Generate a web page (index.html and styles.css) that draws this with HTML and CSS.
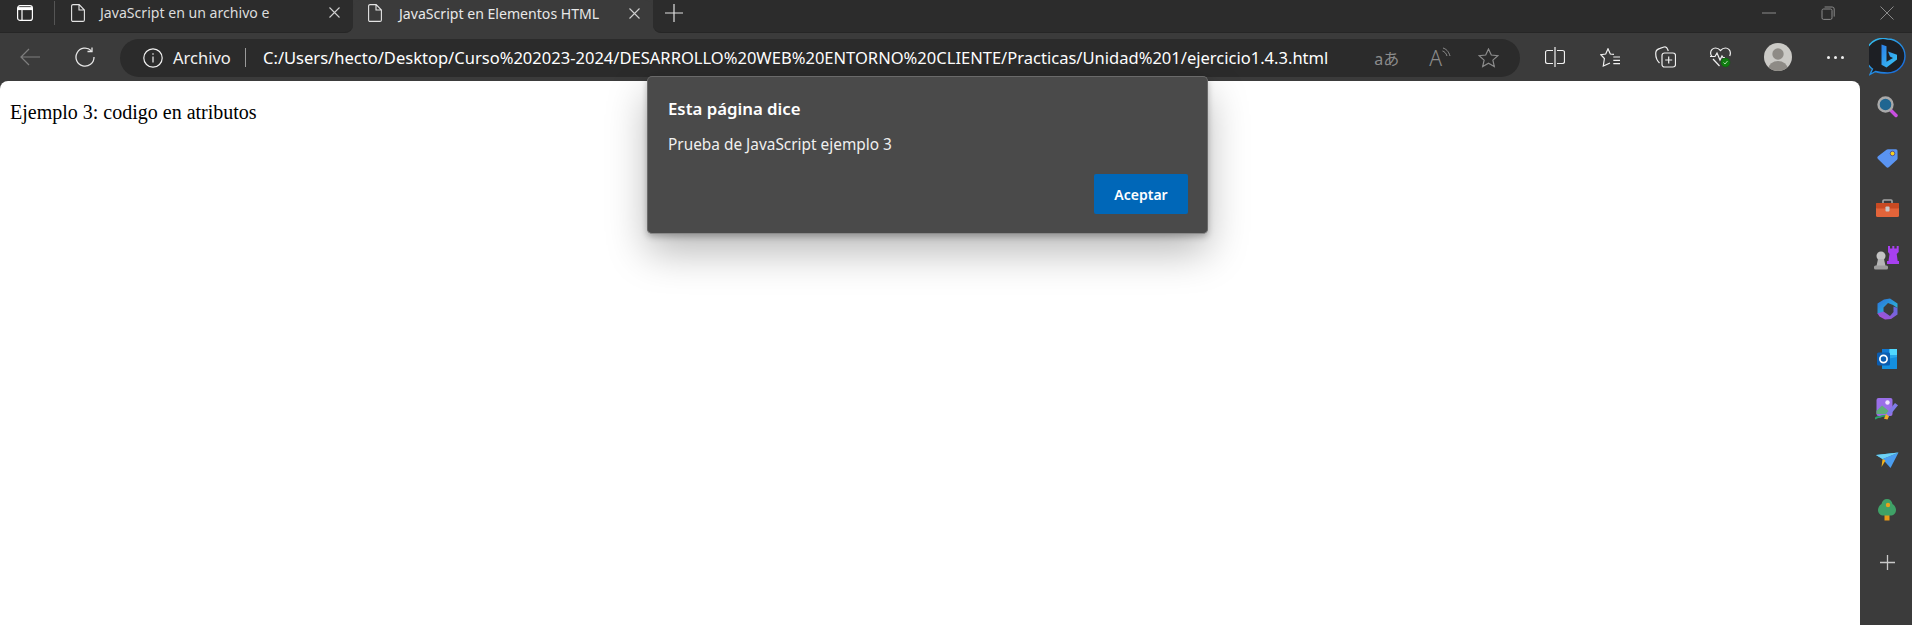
FILE: index.html
```html
<!DOCTYPE html>
<html lang="es">

<head>
  <meta charset="UTF-8">
  <meta name="viewport" content="width=device-width, initial-scale=1.0">
  <title>JavaScript en Elementos HTML</title>
  <link rel="stylesheet" href="styles.css">
</head>

<body>
  <!-- tabs -->
  <div class="tabstrip">
    <div class="tabs-left">
      <svg class="app-icon" width="16" height="16" viewBox="0 0 16 16" fill="none" stroke="#fff" stroke-width="1.2">
        <rect x="0.6" y="0.6" width="14.8" height="14.8" rx="2.5" />
        <path d="M1 3.6h14" stroke-width="3" />
        <path d="M5 4v11" />
      </svg>
      <span class="tab-sep"></span>
      <div class="tab tab-off">
        <svg class="doc" width="14" height="18" viewBox="0 0 14 18" fill="none" stroke="#e4e4e4" stroke-width="1.1">
          <path d="M2 .6h6.2L13.4 6v10a1.4 1.4 0 0 1-1.4 1.4H2A1.4 1.4 0 0 1 .6 16V2A1.4 1.4 0 0 1 2 .6zM8 .8V6h5.2" />
        </svg>
        <span class="tab-title">JavaScript en un archivo e</span>
        <svg class="tab-close" width="11" height="11" viewBox="0 0 11 11" stroke="#d0d0d0" stroke-width="1.1">
          <path d="M.5.5l10 10M10.5.5l-10 10" />
        </svg>
      </div>
    </div>
    <div class="tab tab-on">
      <svg class="doc" width="14" height="18" viewBox="0 0 14 18" fill="none" stroke="#e4e4e4" stroke-width="1.1">
        <path d="M2 .6h6.2L13.4 6v10a1.4 1.4 0 0 1-1.4 1.4H2A1.4 1.4 0 0 1 .6 16V2A1.4 1.4 0 0 1 2 .6zM8 .8V6h5.2" />
      </svg>
      <span class="tab-title">JavaScript en Elementos HTML</span>
      <svg class="tab-close" width="11" height="11" viewBox="0 0 11 11" stroke="#d0d0d0" stroke-width="1.1">
        <path d="M.5.5l10 10M10.5.5l-10 10" />
      </svg>
    </div>
    <div class="tabs-right">
      <svg class="new-tab" width="18" height="18" viewBox="0 0 18 18" stroke="#e0e0e0" stroke-width="1.2">
        <path d="M9 0v18M0 9h18" />
      </svg>
      <div class="window-btns">
        <svg width="14" height="14" viewBox="0 0 14 14" stroke="#8a8a8a" stroke-width="1">
          <path d="M0 7h14" />
        </svg>
        <svg width="14" height="14" viewBox="0 0 14 14" fill="none" stroke="#8a8a8a" stroke-width="1">
          <rect x="1" y="3" width="10" height="10.4" rx="1.5" />
          <path d="M3.6 1h7.6a2 2 0 0 1 2 2v7.6" />
        </svg>
        <svg width="14" height="14" viewBox="0 0 14 14" stroke="#8a8a8a" stroke-width="1">
          <path d="M.5.5l13 13M13.500.5l-13 13" />
        </svg>
      </div>
    </div>
  </div>

  <!-- barra de direcciones -->
  <div class="toolbar">
    <div class="nav-btn">
      <svg width="20" height="18" viewBox="0 0 20 18" fill="none" stroke="#7e7e7e" stroke-width="1.2">
        <path d="M20 9H1M9 1L1 9l8 8" />
      </svg>
    </div>
    <div class="nav-btn">
      <svg width="20" height="20" viewBox="0 0 20 20" fill="none" stroke="#e6e6e6" stroke-width="1.3">
        <path d="M16.300 3.700A9 9 0 1 0 19 10" />
        <path d="M17 .5v4h-4.500" />
      </svg>
    </div>
    <div class="address">
      <svg width="20" height="20" viewBox="0 0 20 20" fill="none" stroke="#f0f0f0" stroke-width="1.2">
        <circle cx="10" cy="10" r="9.200" />
        <path d="M10 8.500v6M10 5.200v1.600" />
      </svg>
      <span class="site-label">Archivo</span>
      <span class="addr-sep"></span>
      <span class="url">C:/Users/hecto/Desktop/Curso%202023-2024/DESARROLLO%20WEB%20ENTORNO%20CLIENTE/Practicas/Unidad%201/ejercicio1.4.3.html</span>
      <div class="addr-tools">
        <span class="translate">aあ</span>
        <span class="read-aloud">A<svg width="9" height="11" viewBox="0 0 9 11" fill="none" stroke="#8c8c8c" stroke-width="1">
            <path d="M1 1c3 1 5.500 3 7 8M.5 4c2 .6 3.500 2 4.500 5" />
          </svg></span>
        <svg width="21" height="20" viewBox="0 0 21 20" fill="none" stroke="#8c8c8c" stroke-width="1.200">
          <path d="M10.500 1l2.800 6 6.600.7-5 4.400 1.400 6.500-5.800-3.300-5.800 3.300L6.100 12.100l-5-4.400 6.600-.7z" />
        </svg>
      </div>
    </div>
    <div class="actions">
      <div class="action">
        <svg width="20" height="20" viewBox="0 0 20 20" fill="none" stroke="#f0f0f0" stroke-width="1.200">
          <path d="M10 0v20M8 3.500H2.500a2 2 0 0 0-2 2v9a2 2 0 0 0 2 2H8M12 3.500h5.500a2 2 0 0 1 2 2v9a2 2 0 0 1-2 2H12" />
        </svg>
      </div>
      <div class="action">
        <svg width="21" height="19" viewBox="0 0 21 19" fill="none" stroke="#f0f0f0" stroke-width="1.200">
          <path d="M14 6.300L10.300 6 8 .8 5.700 6 .8 6.700l3.600 3.800L3.300 18l6.700-3" />
          <path d="M13.300 9H20M13.300 12.300H20M13.300 15.600H20" />
        </svg>
      </div>
      <div class="action">
        <svg width="21" height="22" viewBox="0 0 21 22" fill="none" stroke="#f0f0f0" stroke-width="1.200">
          <rect x="7" y="7" width="13.500" height="14" rx="2.500" />
          <path d="M13.700 10.500v7M10.200 14h7" />
          <path d="M4.500 17C2 14.500.5 10 .8 6.500 1 4 3 3 5 2.400L9 1c1.500-.5 3 .5 3.500 2l.8 2" />
        </svg>
      </div>
      <div class="action health">
        <svg width="21" height="21" viewBox="0 0 21 21" fill="none" stroke="#f0f0f0" stroke-width="1.200">
          <path d="M2 9.500C1 8.500.6 7.500.6 6c0-3 2.400-5 4.900-5 2 0 3.700 1 5 2.500C11.800 2 13.500 1 15.500 1c2.500 0 4.900 2 4.900 5 0 1-.3 2-.7 3" />
          <path d="M0 9.500h5L7 6l3 7 2-4 1 1.500h2" />
          <path d="M3 12l6.500 7" />
          <circle cx="15.500" cy="15.500" r="4.500" fill="#107c10" stroke="#0c5e0c" stroke-width=".5" />
          <path d="M13.500 15.500l1.500 1.500 2.500-3" stroke="#bde5bd" stroke-width=".9" />
        </svg>
      </div>
      <div class="action">
        <svg width="28" height="28" viewBox="0 0 28 28">
          <defs>
            <clipPath id="avatar-clip">
              <circle cx="14" cy="14" r="14" />
            </clipPath>
          </defs>
          <circle cx="14" cy="14" r="14" fill="#cbcac6" />
          <g clip-path="url(#avatar-clip)" fill="#8e8b86">
            <circle cx="14" cy="11" r="5.700" />
            <ellipse cx="14" cy="25.500" rx="9.500" ry="7.500" />
          </g>
        </svg>
      </div>
      <div class="action">
        <span class="dots"><i></i><i></i><i></i></span>
      </div>
      <div class="action bing">
        <svg width="37" height="38" viewBox="0 0 37 38" fill="none">
          <defs>
            <linearGradient id="bing-ring" x1="0" y1="0" x2="1" y2="1">
              <stop offset="0" stop-color="#36c3f0" />
              <stop offset="1" stop-color="#1560d8" />
            </linearGradient>
            <linearGradient id="bing-b" x1="0" y1="0" x2="1" y2="1">
              <stop offset="0" stop-color="#2c7fe8" />
              <stop offset="1" stop-color="#38c6f4" />
            </linearGradient>
          </defs>
          <path d="M18.500 1a17.500 17 0 0 1 0 34c-5 0-9-.5-12-1.500L1 36.500l2.500-5.500A17.500 17 0 0 1 18.500 1z" fill="#1d1f24" stroke="url(#bing-ring)" stroke-width="1.400" />
          <path d="M12.500 6.500l5 1.800v15.500l6.500-3.700-3-1.500-2-5 9 3.200v4.700L17.500 29.500l-5-2.800z" fill="url(#bing-b)" />
        </svg>
      </div>
    </div>
  </div>

  <div class="main">
    <div class="page">
      <p class="page-text">Ejemplo 3: codigo en atributos</p>
    </div>
    <!-- barra lateral -->
    <div class="sidebar">
      <div class="side-item">
        <svg width="21" height="22" viewBox="0 0 21 22">
          <path d="M13 13.500l6 6" stroke="#c94fe0" stroke-width="3.500" stroke-linecap="round" />
          <circle cx="8.500" cy="8.500" r="7" fill="#1f6691" stroke="#a9a9a9" stroke-width="2.400" />
        </svg>
      </div>
      <div class="side-item">
        <svg width="21" height="20" viewBox="0 0 21 20">
          <path d="M11 1.200L19 1.300a1.500 1.500 0 0 1 1.500 1.500l.1 7.500a2 2 0 0 1-.6 1.400L12 19a2 2 0 0 1-2.800 0L1 11a2 2 0 0 1 0-2.800L9.500 1.800A2 2 0 0 1 11 1.200z" fill="#5a94f2" />
          <circle cx="15.500" cy="5.500" r="2.300" fill="#f6d21f" stroke="#4a3f8a" stroke-width=".8" />
        </svg>
      </div>
      <div class="side-item">
        <svg width="23" height="18" viewBox="0 0 23 18">
          <path d="M7 4V2a1 1 0 0 1 1-1h7a1 1 0 0 1 1 1v2" fill="none" stroke="#a5a5a5" stroke-width="1.600" />
          <rect x="0" y="4" width="23" height="14" rx="1.500" fill="#e2643a" />
          <rect x="0" y="4" width="23" height="5.500" rx="1" fill="#c94a22" />
          <rect x="9.500" y="7.500" width="4" height="5" rx=".8" fill="#c9c9c9" />
        </svg>
      </div>
      <div class="side-item">
        <svg width="26" height="24" viewBox="0 0 26 24">
          <path d="M14 0h2v2.500h2.300V0h2v2.500h2.400V0h2v6l-2 2 1 7h1.300v3H13v-3h1.500l1-7-1.500-2z" fill="#a740f0" />
          <circle cx="7" cy="10" r="4.500" fill="#c3c3c3" />
          <path d="M4 13h6l1.500 7H2.500z" fill="#b5b5b5" />
          <rect x="0" y="19.500" width="14" height="4" rx="1.500" fill="#9d9d9d" />
        </svg>
      </div>
      <div class="side-item">
        <svg width="21" height="22" viewBox="0 0 21 22">
          <defs>
            <linearGradient id="cop-a" x1="0" y1="0" x2="1" y2="1">
              <stop offset="0" stop-color="#2a6fdc" />
              <stop offset="1" stop-color="#2cc3d6" />
            </linearGradient>
            <linearGradient id="cop-b" x1="0" y1="1" x2="1" y2="0">
              <stop offset="0" stop-color="#b24bd4" />
              <stop offset="1" stop-color="#5a6fe0" />
            </linearGradient>
          </defs>
          <path d="M7 1.500L13 .5l7.500 5v4.500L16 7 11 5 6.500 9.500V14L.5 16V5.500z" fill="url(#cop-a)" />
          <path d="M.5 15.500l6-2L13 18l3.500-4V8.500l4 1.500v6.500L14 21l-6 .5-5.500-3z" fill="url(#cop-b)" />
        </svg>
      </div>
      <div class="side-item">
        <svg width="21" height="20" viewBox="0 0 21 20">
          <rect x="5" y="0" width="15" height="20" rx="1.500" fill="#28a8ea" />
          <path d="M5 0h7.500v6H5z" fill="#0f78d4" />
          <path d="M12.500 0H20v6h-7.500z" fill="#50d9ff" />
          <path d="M5 11l15-3v11a1 1 0 0 1-1 1H6a1 1 0 0 1-1-1z" fill="#1490df" />
          <rect x="0" y="3.500" width="13" height="13" rx="1.500" fill="#0a5cb0" />
          <circle cx="6.500" cy="10" r="3.600" fill="none" stroke="#fff" stroke-width="1.700" />
        </svg>
      </div>
      <div class="side-item">
        <svg width="24" height="23" viewBox="0 0 24 23">
          <rect x="1.500" y="0" width="16" height="18" rx="2" fill="#9a6fe8" />
          <circle cx="12.500" cy="4.500" r="2.200" fill="#f0e4ff" />
          <path d="M1.500 13L7 7.500 15 14v2H1.500z" fill="#5fae7a" />
          <path d="M0 21c2-3 4-1 6-2.500s3 0 5-1" fill="none" stroke="#2ea36b" stroke-width="1.800" />
          <path d="M11 16l9-11 3 2.200-9 11z" fill="#7f7ae8" />
          <path d="M11 16l3 2.200-1.500 3.300-3.500-.8z" fill="#f0b12a" />
        </svg>
      </div>
      <div class="side-item">
        <svg width="23" height="16" viewBox="0 0 23 16">
          <path d="M0 3L22.500.5 6.500 7z" fill="#38b9ee" />
          <path d="M6.500 7l16-6.500L14.500 16z" fill="#4a9df0" />
          <path d="M6.500 7l3 1.500L5.500 15z" fill="#f2b21c" />
          <path d="M0 3l6.500 4 16-6.500z" fill="#6dd1f5" />
        </svg>
      </div>
      <div class="side-item">
        <svg width="18" height="22" viewBox="0 0 18 22">
          <rect x="6.500" y="15" width="5" height="6.500" fill="#e79a18" />
          <path d="M9 0c3 0 5 2 5.500 5 2 1 3.500 3.500 3.500 6 0 3.500-2.500 5.500-5.500 5.500h-7C2.500 16.500 0 14.500 0 11c0-2.500 1.500-5 3.500-6C4 2 6 0 9 0z" fill="#3fa167" />
          <circle cx="10" cy="6" r="2.200" fill="#eaa11a" />
        </svg>
      </div>
      <div class="side-item side-add">
        <svg width="15" height="15" viewBox="0 0 15 15" stroke="#c9c9c9" stroke-width="1.300">
          <path d="M7.500 0v15M0 7.500h15" />
        </svg>
      </div>
    </div>
  </div>

  <!-- alert -->
  <div class="dialog">
    <div class="dialog-title">Esta página dice</div>
    <div class="dialog-msg">Prueba de JavaScript ejemplo 3</div>
    <div class="dialog-foot">
      <button class="dialog-btn">Aceptar</button>
    </div>
  </div>
</body>

</html>
```

FILE: styles.css
```css
* {
  box-sizing: border-box;
}

html,
body {
  margin: 0;
  height: 625px;
  overflow: hidden;
}

body {
  display: flex;
  flex-direction: column;
  background: #3b3b3b;
  font-family: "Noto Sans", sans-serif;
  color: #fff;
}

svg {
  display: block;
  flex: none;
}

/* tabs */
.tabstrip {
  display: flex;
  height: 33px;
  background: #3b3b3b;
}

.tabs-left {
  display: flex;
  align-items: center;
  width: 353px;
  padding-bottom: 7px;
  background: #2c2c2c;
  border-bottom: 1px solid #262626;
  border-bottom-right-radius: 8px;
}

.app-icon {
  margin-left: 17px;
}

.tab-sep {
  width: 1px;
  height: 24px;
  margin-left: 21px;
  background: #555;
}

.tab {
  display: flex;
  align-items: center;
  font-size: 14.1px;
  color: #dcdcdc;
}

.tab-off {
  flex: 1;
  padding-left: 16px;
}

.tab-on {
  width: 300px;
  padding: 0 0 7px 15px;
  background: #3b3b3b;
  border-radius: 8px 8px 0 0;
  color: #e8e8e8;
}

.tab-title {
  margin-left: 15px;
  flex: 1;
  white-space: nowrap;
}

.tab-on .tab-title {
  margin-left: 17px;
}

.tab-close {
  margin-right: 13px;
}

.tabs-right {
  flex: 1;
  display: flex;
  align-items: center;
  padding-bottom: 7px;
  background: #2c2c2c;
  border-bottom: 1px solid #262626;
  border-bottom-left-radius: 8px;
}

.new-tab {
  margin-left: 12px;
}

.window-btns {
  margin-left: auto;
  margin-right: 18px;
  display: flex;
  gap: 45px;
}

/* barra de direcciones */
.toolbar {
  display: flex;
  align-items: center;
  height: 48px;
  padding-left: 2px;
  background: #3b3b3b;
}

.nav-btn {
  width: 55px;
  display: flex;
  justify-content: center;
}

.address {
  display: flex;
  align-items: center;
  width: 1400px;
  height: 38px;
  margin-left: 8px;
  margin-top: 1px;
  padding: 0 21px 0 23px;
  background: #2b2b2b;
  border-radius: 19px;
}

.site-label {
  margin-left: 10px;
  width: 59px;
  font-size: 16.5px;
  white-space: nowrap;
  color: #f2f2f2;
}

.addr-sep {
  width: 1px;
  height: 19px;
  margin: 0 17px 0 13px;
  background: #9a9a9a;
}

.url {
  font-size: 16.55px;
  white-space: nowrap;
  color: #fff;
}

.addr-tools {
  margin-left: auto;
  display: flex;
  align-items: center;
  gap: 27px;
}

.translate {
  margin-right: 3px;
  font-family: "Noto Sans", "Noto Sans CJK JP", sans-serif;
  font-size: 16px;
  color: #8c8c8c;
}

.read-aloud {
  display: flex;
  align-items: flex-start;
  font-size: 21px;
  line-height: 26px;
  font-weight: 300;
  color: #8c8c8c;
}

.read-aloud svg {
  margin-top: 2px;
}

.actions {
  display: grid;
  grid-template-columns: 56px 55px 55px 54px 62px 52px 51px;
  margin-left: 7px;
}

.action {
  display: flex;
  align-items: center;
  justify-content: center;
  height: 48px;
}

.bing {
  padding-left: 2px;
}

.dots {
  display: flex;
  gap: 4px;
}

.dots i {
  width: 3px;
  height: 3px;
  border-radius: 50%;
  background: #f0f0f0;
}

/* contenido */
.main {
  flex: 1;
  display: flex;
}

.page {
  flex: 1;
  background: #fff;
  border-radius: 8px 8px 0 0;
  padding: 20px 10px;
}

.page-text {
  margin: 0;
  font-family: "Liberation Serif", serif;
  font-size: 20px;
  line-height: 23px;
  color: #000;
}

.sidebar {
  width: 52px;
  padding-top: 1px;
  background: #3b3b3b;
}

.side-item {
  height: 50.4px;
  display: flex;
  align-items: center;
  justify-content: center;
  padding-left: 2px;
}

.side-add {
  padding-top: 3px;
}

/* alert */
.dialog {
  position: absolute;
  left: 647px;
  top: 76px;
  width: 561px;
  height: 158px;
  padding: 20px 20px 20px;
  background: #4a4a4a;
  border: 1px solid #6a6a6a;
  border-bottom-color: #8a8a8a;
  border-radius: 5px;
  box-shadow: 0 18px 40px rgba(0, 0, 0, 0.28), 0 3px 6px rgba(0, 0, 0, 0.25);
}

.dialog-title {
  font-size: 16.8px;
  font-weight: 600;
  line-height: 24px;
}

.dialog-msg {
  margin-top: 14px;
  font-size: 15.4px;
  line-height: 20px;
  color: #f0f0f0;
}

.dialog-foot {
  display: flex;
  justify-content: flex-end;
  margin-top: 19px;
  margin-right: -1px;
}

.dialog-btn {
  width: 94px;
  height: 40px;
  border: 0;
  border-radius: 2px;
  background: #0067b8;
  color: #fff;
  font-family: "Noto Sans", sans-serif;
  font-size: 14px;
  font-weight: 600;
}
```
